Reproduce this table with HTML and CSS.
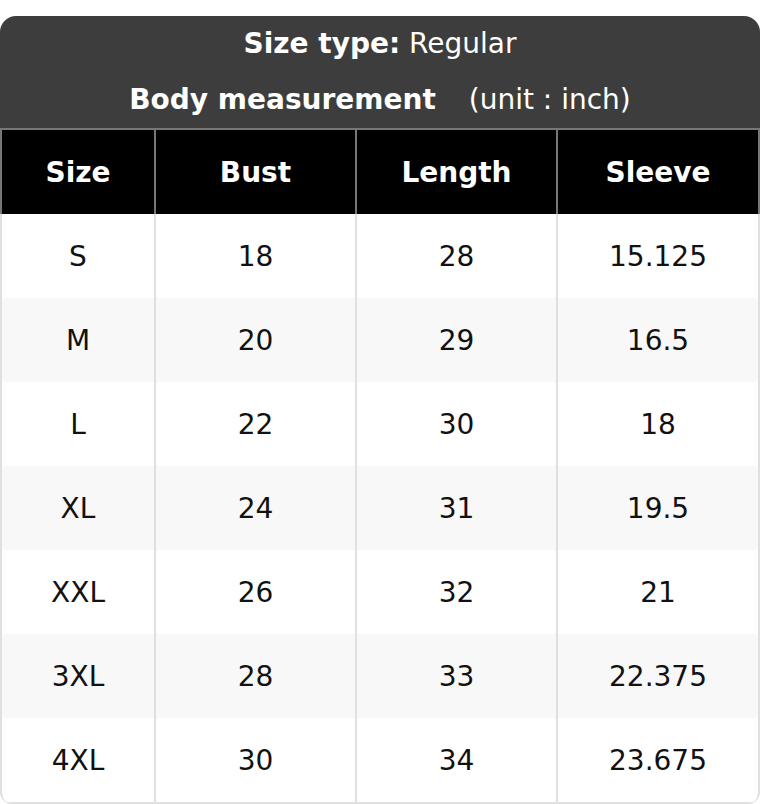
FILE: index.html
```html
<!DOCTYPE html>
<html lang="en">
<head>
<meta charset="utf-8">
<title>Size chart</title>
<link rel="stylesheet" href="styles.css">
</head>
<body>
<div class="card">
  <div class="title">
    <div class="title-line"><b>Size type:</b> Regular</div>
    <div class="title-line"><b>Body measurement</b><span class="unit">(unit : inch)</span></div>
  </div>
  <div class="row head">
    <div class="cell">Size</div>
    <div class="cell">Bust</div>
    <div class="cell">Length</div>
    <div class="cell">Sleeve</div>
  </div>
  <div class="tbody">
    <div class="row"><div class="cell">S</div><div class="cell">18</div><div class="cell">28</div><div class="cell">15.125</div></div>
    <div class="row alt"><div class="cell">M</div><div class="cell">20</div><div class="cell">29</div><div class="cell">16.5</div></div>
    <div class="row"><div class="cell">L</div><div class="cell">22</div><div class="cell">30</div><div class="cell">18</div></div>
    <div class="row alt"><div class="cell">XL</div><div class="cell">24</div><div class="cell">31</div><div class="cell">19.5</div></div>
    <div class="row"><div class="cell">XXL</div><div class="cell">26</div><div class="cell">32</div><div class="cell">21</div></div>
    <div class="row alt"><div class="cell">3XL</div><div class="cell">28</div><div class="cell">33</div><div class="cell">22.375</div></div>
    <div class="row"><div class="cell">4XL</div><div class="cell">30</div><div class="cell">34</div><div class="cell">23.675</div></div>
  </div>
</div>
</body>
</html>
```
FILE: styles.css
```css
html, body {
  margin: 0;
  padding: 0;
  background: #ffffff;
}
body {
  font-family: "DejaVu Sans", sans-serif;
  font-size: 28px;
  color: #111111;
}
.card {
  margin-top: 16px;
  width: 760px;
  border-radius: 16px 16px 0 0;
  overflow: hidden;
}
.title {
  background: #3d3d3d;
  color: #ffffff;
  text-align: center;
}
.title-line {
  height: 56px;
  line-height: 56px;
}
.title b {
  font-weight: bold;
}
.unit {
  margin-left: 33px;
}
.row {
  display: grid;
  grid-template-columns: 152px 199px 199px 200px;
  column-gap: 2px;
}
.row .cell {
  height: 84px;
  display: flex;
  align-items: center;
  justify-content: center;
  background: #ffffff;
}
.row.alt .cell {
  background: #f8f8f8;
}
.head {
  background: #777777;
  padding: 2px 2px 0 2px;
}
.head .cell {
  background: #000000;
  color: #ffffff;
  font-weight: bold;
}
.tbody {
  background: #e0e0e0;
  padding: 0 0 2px 0;
  border-left: 2px solid #e0e0e0;
  border-right: 2px solid #e0e0e0;
  border-radius: 0 0 12px 12px;
  overflow: hidden;
}
.tbody .row {
  background: #e0e0e0;
}
```
